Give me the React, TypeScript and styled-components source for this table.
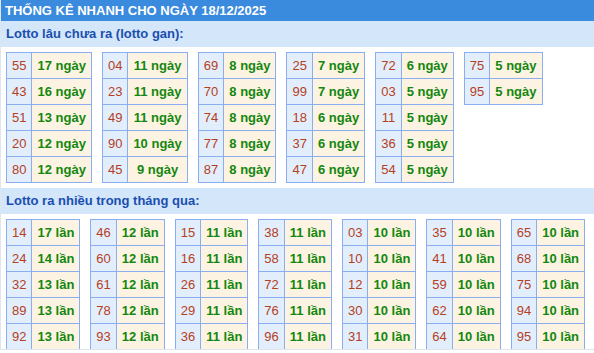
import styled, { createGlobalStyle } from 'styled-components'

const GlobalStyle = createGlobalStyle`
  body {
    margin: 0;
    background: #fff;
    font-family: "Liberation Sans", Arial, sans-serif;
  }
`

const Box = styled.div`
  width: 594px;
  height: 350px;
  border-left: 1px solid #dde6ee;
  border-bottom: 1px solid #dde6ee;
  box-sizing: border-box;
  overflow: hidden;
`

const Header = styled.div`
  height: 21px;
  background: #3a8ade;
  color: #fff;
  font-size: 13px;
  font-weight: bold;
  line-height: 21px;
  padding-left: 4px;
  white-space: nowrap;
`

const SectionTitle = styled.div`
  height: 26px;
  background: #d3e6fa;
  color: #1a4fb0;
  font-size: 13px;
  font-weight: bold;
  line-height: 26px;
  padding-left: 5px;
`

const Tables = styled.div`
  display: flex;
  align-items: flex-start;
  gap: 10px;
  padding: 5px 0 5px 5px;
`

const Table = styled.table`
  border-collapse: collapse;
  font-size: 13px;

  td {
    border: 1px solid #8aaef0;
    height: 25px;
    padding: 0 5px;
    text-align: center;
    line-height: 15px;
    white-space: nowrap;
  }
`

const Num = styled.td`
  background: #e2eefc;
  color: #b5401d;
`

const Val = styled.td`
  background: #fdf3e2;
  color: #13870f;
  font-weight: bold;
`

type Row = [string, number]

const gan: Row[][] = [
  [['55', 17], ['43', 16], ['51', 13], ['20', 12], ['80', 12]],
  [['04', 11], ['23', 11], ['49', 11], ['90', 10], ['45', 9]],
  [['69', 8], ['70', 8], ['74', 8], ['77', 8], ['87', 8]],
  [['25', 7], ['99', 7], ['18', 6], ['37', 6], ['47', 6]],
  [['72', 6], ['03', 5], ['11', 5], ['36', 5], ['54', 5]],
  [['75', 5], ['95', 5]],
]

const nhieu: Row[][] = [
  [['14', 17], ['24', 14], ['32', 13], ['89', 13], ['92', 13]],
  [['46', 12], ['60', 12], ['61', 12], ['78', 12], ['93', 12]],
  [['15', 11], ['16', 11], ['26', 11], ['29', 11], ['36', 11]],
  [['38', 11], ['58', 11], ['72', 11], ['76', 11], ['96', 11]],
  [['03', 10], ['10', 10], ['12', 10], ['30', 10], ['31', 10]],
  [['35', 10], ['41', 10], ['59', 10], ['62', 10], ['64', 10]],
  [['65', 10], ['68', 10], ['75', 10], ['94', 10], ['95', 10]],
]

function Section({ title, groups, unit }: { title: string; groups: Row[][]; unit: string }) {
  return (
    <>
      <SectionTitle>{title}</SectionTitle>
      <Tables>
        {groups.map((rows, i) => (
          <Table key={i}>
            <tbody>
              {rows.map(([num, count]) => (
                <tr key={num}>
                  <Num>{num}</Num>
                  <Val>{count} {unit}</Val>
                </tr>
              ))}
            </tbody>
          </Table>
        ))}
      </Tables>
    </>
  )
}

export default function App() {
  return (
    <Box>
      <GlobalStyle />
      <Header>THỐNG KÊ NHANH CHO NGÀY 18/12/2025</Header>
      <Section title="Lotto lâu chưa ra (lotto gan):" groups={gan} unit="ngày" />
      <Section title="Lotto ra nhiều trong tháng qua:" groups={nhieu} unit="lần" />
    </Box>
  )
}
